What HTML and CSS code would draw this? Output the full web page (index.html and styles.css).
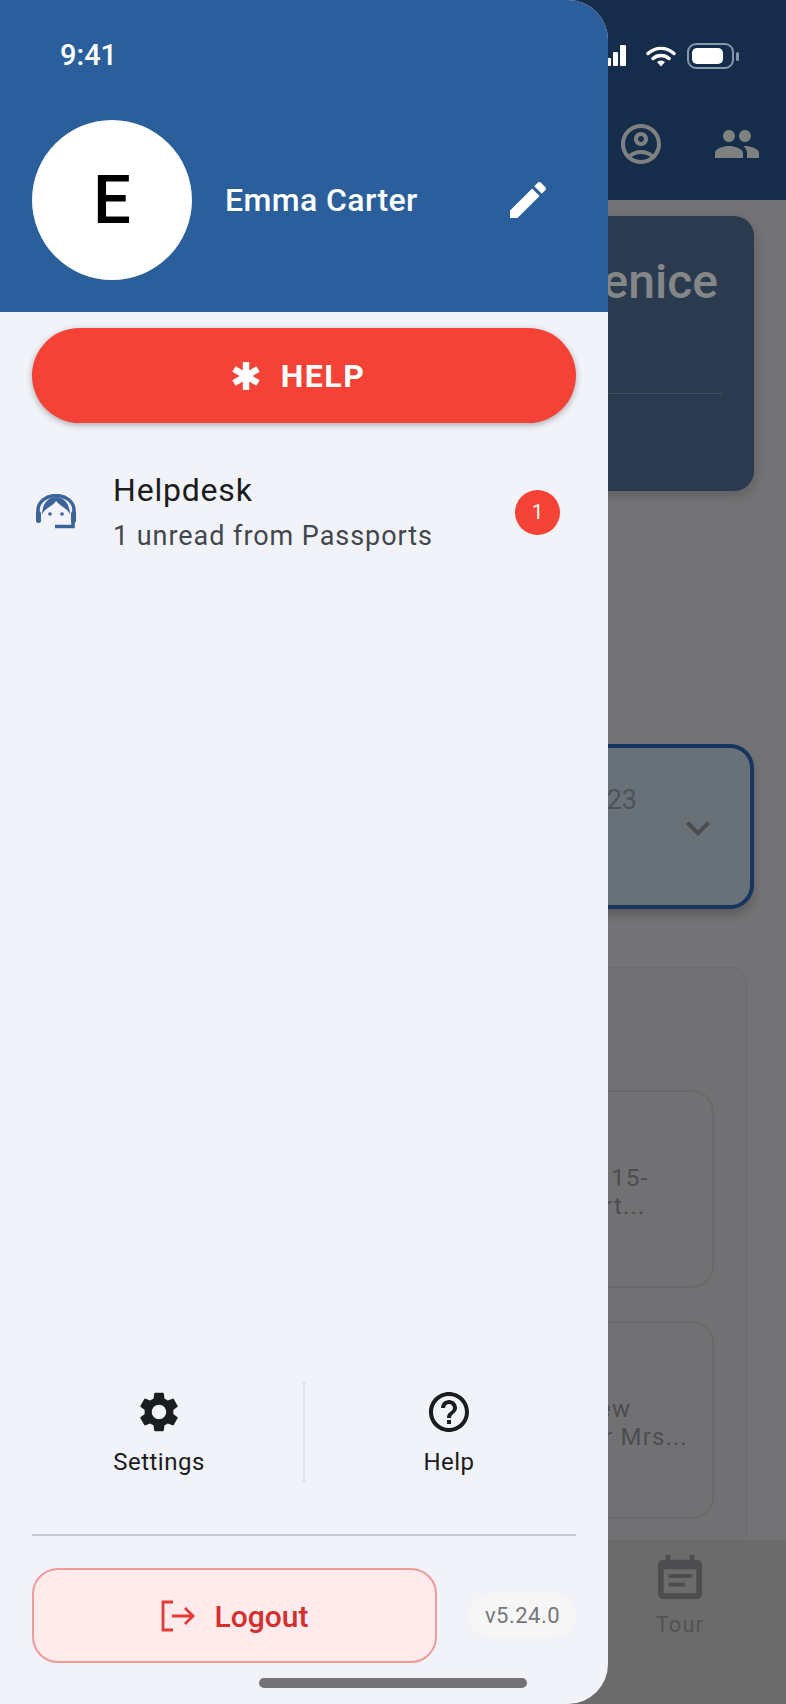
FILE: index.html
```html
<!DOCTYPE html>
<html>
	<head>
		<title>Menu</title>
		<link rel="stylesheet" href="styles.css">
	</head>
	<body>
		<div class="screen">
			<!-- the app behind the drawer, dimmed -->
			<div class="appbar">
				<div class="status">
					<svg class="signal" width="27" height="24" viewBox="0 0 27 24"><rect x="0" y="14" width="5" height="8" rx="1"/><rect x="7" y="8" width="5" height="14" rx="1"/><rect x="14" y="1" width="6" height="21" rx="1"/></svg>
					<svg class="wifi" width="30" height="22" viewBox="0 0 30 22"><path d="M2 8.5a19 19 0 0 1 26 0M7 13.5a12 12 0 0 1 16 0" fill="none" stroke="#fff" stroke-width="3.4" stroke-linecap="round"/><path d="M11 17a6 6 0 0 1 8 0l-4 4.500z" fill="#fff"/></svg>
					<div class="battery"><div class="battery-level"></div></div>
					<div class="battery-nub"></div>
				</div>
				<div class="actions">
					<svg width="48" height="48" viewBox="0 0 24 24"><path d="M12 2C6.480 2 2 6.480 2 12s4.480 10 10 10 10-4.480 10-10S17.520 2 12 2zM7.350 18.500C8.660 17.560 10.260 17 12 17s3.340.560 4.650 1.500C15.340 19.440 13.740 20 12 20s-3.340-.560-4.650-1.500zm10.790-1.380C16.450 15.800 14.320 15 12 15s-4.450.800-6.140 2.120C4.700 15.730 4 13.950 4 12c0-4.420 3.580-8 8-8s8 3.580 8 8c0 1.950-.700 3.730-1.860 5.120zM12 6c-1.930 0-3.500 1.570-3.500 3.500S10.070 13 12 13s3.500-1.570 3.500-3.500S13.930 6 12 6zm0 5c-.830 0-1.500-.670-1.500-1.500S11.170 8 12 8s1.500.670 1.500 1.500S12.830 11 12 11z"/></svg>
					<svg width="48" height="48" viewBox="0 0 24 24"><path d="M16 11c1.660 0 2.990-1.340 2.990-3S17.660 5 16 5s-3 1.340-3 3 1.340 3 3 3zm-8 0c1.660 0 2.990-1.340 2.990-3S9.660 5 8 5 5 6.340 5 8s1.340 3 3 3zm0 2c-2.330 0-7 1.170-7 3.500V19h14v-2.500C15 14.170 10.330 13 8 13zm8 0c-.290 0-.620.020-.970.050 1.160.840 1.970 1.970 1.970 3.450V19h6v-2.500c0-2.330-4.670-3.500-7-3.500z"/></svg>
				</div>
			</div>
			<div class="content">
				<div class="hero">
					<div class="hero-title">Venice</div>
					<div class="hero-line"></div>
				</div>
				<div class="selector">
					<div class="selector-date">23</div>
					<svg width="48" height="48" viewBox="0 0 24 24"><path d="M7.410 8.590 12 13.170l4.590-4.580L18 10l-6 6-6-6z"/></svg>
				</div>
				<div class="panel">
					<div class="tile"><span>&nbsp;15-</span><span>rt...</span></div>
					<div class="tile tile-two"><span class="tile-short">ew</span><span>r Mrs...</span></div>
				</div>
			</div>
			<div class="tabbar">
				<div class="tab">
					<svg width="44" height="48" viewBox="0 0 46 48"><path d="M8 2h5v5h20V2h5v5h3a5 5 0 0 1 5 5v31a5 5 0 0 1-5 5H5a5 5 0 0 1-5-5V12a5 5 0 0 1 5-5h3zM6 17v25h34V17z" fill-rule="evenodd"/><rect x="11" y="22" width="25" height="4"/><rect x="11" y="31" width="17" height="4"/></svg>
					<div class="tab-label">Tour</div>
				</div>
			</div>

			<!-- drawer -->
			<div class="drawer">
				<div class="drawer-head">
					<div class="clock">9:41</div>
					<div class="profile">
						<div class="avatar">E</div>
						<div class="profile-name">Emma Carter</div>
						<svg class="edit" width="48" height="48" viewBox="0 0 24 24"><path d="M3 17.250V21h3.750L17.810 9.940l-3.750-3.750L3 17.250zM20.710 7.040c.390-.390.390-1.020 0-1.410l-2.340-2.340c-.390-.390-1.020-.390-1.410 0l-1.830 1.830 3.750 3.750 1.830-1.830z"/></svg>
					</div>
				</div>
				<div class="help-btn">
					<svg width="30" height="30" viewBox="0 0 28 28"><g fill="#fff"><rect x="11" y="1" width="6" height="26"/><rect x="11" y="1" width="6" height="26" transform="rotate(60 14 14)"/><rect x="11" y="1" width="6" height="26" transform="rotate(120 14 14)"/></g></svg>
					<span>HELP</span>
				</div>
				<div class="list-item">
					<svg class="list-icon" width="40" height="36" viewBox="16 24 40 36">
						<path d="M18 44v-4a18 14.500 0 0 1 36 0v4" fill="none" stroke="#3a6398" stroke-width="3.500"/>
						<path d="M22 45C22 33 29 27 36 27s14 6 14 18C49 39 41 37 36 31 32 37 24 38 22 45z" fill="#3a6398"/>
						<rect x="16" y="41" width="5" height="12" rx="2.500" fill="#3a6398"/>
						<rect x="51" y="41" width="5" height="12" rx="2.500" fill="#3a6398"/>
						<path d="M53 50v6.500H35" fill="none" stroke="#3a6398" stroke-width="3.500"/>
						<circle cx="30" cy="44" r="1.800" fill="#3a6398"/>
						<circle cx="42" cy="44" r="1.800" fill="#3a6398"/>
					</svg>
					<div class="list-text">
						<div class="list-title">Helpdesk</div>
						<div class="list-sub">1 unread from Passports</div>
					</div>
					<div class="badge">1</div>
				</div>
				<div class="drawer-space"></div>
				<div class="links">
					<div class="link">
						<svg width="48" height="48" viewBox="0 0 24 24"><path d="M19.140 12.940c.040-.300.060-.610.060-.940 0-.320-.020-.640-.070-.940l2.030-1.580c.180-.140.230-.410.120-.610l-1.920-3.320c-.120-.220-.370-.290-.590-.220l-2.390.960c-.500-.380-1.030-.700-1.620-.940l-.360-2.540c-.040-.240-.240-.410-.480-.410h-3.840c-.240 0-.430.170-.470.410l-.360 2.540c-.590.240-1.130.570-1.620.940l-2.390-.960c-.220-.080-.470 0-.590.220L2.740 8.870c-.120.210-.080.470.120.610l2.030 1.580c-.050.300-.090.630-.090.940s.020.640.070.940l-2.030 1.580c-.180.140-.230.410-.120.610l1.920 3.320c.120.220.370.290.590.220l2.390-.960c.500.380 1.030.700 1.620.940l.360 2.540c.050.240.240.410.480.410h3.840c.240 0 .440-.170.470-.410l.360-2.540c.590-.240 1.130-.560 1.620-.940l2.390.960c.220.080.470 0 .590-.220l1.920-3.320c.120-.220.070-.470-.120-.610l-2.010-1.580zM12 15.600c-1.980 0-3.600-1.620-3.600-3.600s1.620-3.600 3.600-3.600 3.600 1.620 3.600 3.600-1.620 3.600-3.600 3.600z"/></svg>
						<div class="link-label">Settings</div>
					</div>
					<div class="link link-right">
						<svg width="48" height="48" viewBox="0 0 24 24"><path d="M11 18h2v-2h-2v2zm1-16C6.480 2 2 6.480 2 12s4.480 10 10 10 10-4.480 10-10S17.520 2 12 2zm0 18c-4.410 0-8-3.590-8-8s3.590-8 8-8 8 3.590 8 8-3.590 8-8 8zm0-14c-2.210 0-4 1.790-4 4h2c0-1.100.900-2 2-2s2 .900 2 2c0 2-3 1.750-3 5h2c0-2.250 3-2.500 3-5 0-2.210-1.790-4-4-4z"/></svg>
						<div class="link-label">Help</div>
					</div>
				</div>
				<div class="rule"></div>
				<div class="foot">
					<div class="logout">
						<svg width="34" height="32" viewBox="0 0 34 32"><path d="M12 2H2v28h10M11 16h21M24 8l8 8-8 8" fill="none" stroke="#e53935" stroke-width="2.800"/></svg>
						<span class="logout-label">Logout</span>
					</div>
					<div class="version">v5.24.0</div>
				</div>
			</div>
			<div class="home-bar"></div>
		</div>
	</body>
</html>
```

FILE: styles.css
```css
* {
	box-sizing: border-box;
}
body {
	margin: 0;
	font-family: Roboto, "Liberation Sans", sans-serif;
}
.screen {
	position: relative;
	width: 786px;
	height: 1704px;
	overflow: hidden;
	display: flex;
	flex-direction: column;
	background: #737375;
}

/* app behind */
.appbar {
	height: 200px;
	background: #152c4a;
	flex-shrink: 0;
}
.status {
	display: flex;
	align-items: center;
	justify-content: flex-end;
	height: 56px;
	margin-top: 28px;
	padding-right: 47px;
}
.signal {
	fill: #fff;
	margin-right: 13px;
}
.wifi {
	margin-right: 11px;
}
.battery {
	width: 47px;
	height: 26px;
	padding: 3px;
	border: 2px solid #8797ab;
	border-radius: 9px;
}
.battery-level {
	width: 31px;
	height: 16px;
	background: #fff;
	border-radius: 5px;
}
.battery-nub {
	width: 3px;
	height: 9px;
	margin-left: 2px;
	background: #8797ab;
	border-radius: 2px;
}
.actions {
	display: flex;
	justify-content: flex-end;
	gap: 48px;
	padding-right: 25px;
	fill: #7f8080;
	margin-top: 36px;
}
.content {
	flex: 1;
	min-height: 0;
	padding-left: 400px;
	background: #737375;
}
.hero {
	height: 275px;
	margin: 16px 32px 0 0;
	padding: 38px 32px 0 0;
	background: #2a3b50;
	border-radius: 20px;
	box-shadow: 0 4px 12px rgba(0, 0, 0, .18);
}
.hero-title {
	text-align: right;
	padding-right: 4px;
	font-size: 48px;
	font-weight: 500;
	line-height: 56px;
	color: #858688;
}
.hero-line {
	height: 1px;
	margin-top: 83px;
	background: #45505f;
}
.selector {
	display: flex;
	justify-content: flex-end;
	height: 165px;
	margin: 253px 32px 0 0;
	padding: 56px 28px 0 0;
	background: #687078;
	border: 4px solid #143660;
	border-radius: 24px;
	box-shadow: 0 6px 10px rgba(0, 0, 0, .2);
	fill: #4a4c4e;
}
.selector-date {
	margin: -19px 37px 0 0;
	font-size: 27px;
	line-height: 30px;
	color: #4e5358;
}
.panel {
	height: 600px;
	margin: 58px 39px 0 0;
	padding: 122px 32px 0 0;
	background: #717173;
	border: 1px solid #6c6c6e;
	border-radius: 16px;
}
.tile {
	display: flex;
	flex-direction: column;
	height: 198px;
	padding: 72px 0 0 201px;
	border: 2px solid #69696b;
	border-radius: 22px;
	font-size: 24px;
	line-height: 28px;
	letter-spacing: 1.2px;
	color: #4c4d4f;
}
.tile-two {
	margin-top: 33px;
	padding-top: 72px;
}
.tile-short {
	margin-left: -6px;
}
.tabbar {
	display: flex;
	justify-content: flex-end;
	height: 164px;
	padding: 12px 82px 0 0;
	background: #6b6b6c;
	flex-shrink: 0;
}
.tab {
	display: flex;
	flex-direction: column;
	align-items: center;
	fill: #4d4d4f;
}
.tab-label {
	margin-top: 12px;
	font-size: 22px;
	line-height: 26px;
	letter-spacing: 1px;
	color: #535355;
}

/* drawer */
.drawer {
	position: absolute;
	top: 0;
	left: 0;
	bottom: 0;
	width: 608px;
	display: flex;
	flex-direction: column;
	background: #f2f3f9;
	border-radius: 0 40px 40px 0;
	overflow: hidden;
}
.drawer-head {
	height: 312px;
	padding: 40px 32px 0;
	background: #2b5f9b;
	flex-shrink: 0;
}
.clock {
	margin-left: 28px;
	font-size: 29px;
	font-weight: 500;
	line-height: 30px;
	color: #fff;
}
.profile {
	display: flex;
	align-items: center;
	margin-top: 50px;
}
.avatar {
	display: flex;
	align-items: center;
	justify-content: center;
	width: 160px;
	height: 160px;
	background: #fff;
	border-radius: 50%;
	font-size: 67px;
	font-weight: 500;
	color: #000;
}
.profile-name {
	flex: 1;
	margin-left: 33px;
	font-size: 32px;
	font-weight: 500;
	letter-spacing: .4px;
	color: #fff;
}
.edit {
	fill: #fff;
	margin-right: 24px;
}
.help-btn {
	display: flex;
	align-items: center;
	justify-content: center;
	gap: 20px;
	height: 95px;
	margin: 16px 32px 0;
	padding-right: 12px;
	background: #f44336;
	border-radius: 48px;
	box-shadow: 0 2px 6px rgba(0, 0, 0, .3);
	font-size: 32px;
	font-weight: 700;
	letter-spacing: 1.5px;
	color: #fff;
}
.list-item {
	display: flex;
	align-items: center;
	height: 118px;
	margin-top: 30px;
	padding: 0 48px 0 36px;
}
.list-icon {
	margin-right: 37px;
}
.list-text {
	flex: 1;
}
.list-title {
	font-size: 32px;
	line-height: 40px;
	letter-spacing: .8px;
	color: #1a1c1e;
}
.list-sub {
	margin-top: 8px;
	font-size: 27px;
	line-height: 36px;
	letter-spacing: .95px;
	color: #42474e;
}
.badge {
	width: 45px;
	height: 45px;
	background: #f44336;
	border-radius: 50%;
	font-size: 20px;
	line-height: 45px;
	text-align: center;
	color: #fff;
}
.drawer-space {
	flex: 1;
}
.links {
	display: flex;
	height: 100px;
	padding: 0 15px;
}
.link {
	flex: 1;
	display: flex;
	flex-direction: column;
	align-items: center;
	padding-top: 6px;
	fill: #1a1c1e;
}
.link-right {
	border-left: 2px solid #dde0e6;
}
.link-label {
	margin-top: 12px;
	font-size: 24px;
	line-height: 28px;
	letter-spacing: .5px;
	color: #1a1c1e;
}
.rule {
	height: 2px;
	margin: 52px 32px 0;
	background: #c9cad6;
}
.foot {
	display: flex;
	align-items: center;
	justify-content: space-between;
	margin: 32px 32px 41px;
}
.logout {
	display: flex;
	align-items: center;
	justify-content: center;
	gap: 20px;
	width: 405px;
	height: 95px;
	background: #ffebec;
	border: 2px solid #f09a9c;
	border-radius: 26px;
	font-size: 30px;
	font-weight: 500;
	color: #d32f2f;
}
.logout-label {
	padding-top: 2px;
}
.version {
	width: 107px;
	height: 45px;
	background: #f6f6f7;
	border-radius: 23px;
	font-size: 22px;
	line-height: 45px;
	letter-spacing: .5px;
	text-align: center;
	color: #75777b;
}
.home-bar {
	position: absolute;
	left: 259px;
	top: 1678px;
	width: 268px;
	height: 10px;
	background: #737377;
	border-radius: 5px;
}
```
